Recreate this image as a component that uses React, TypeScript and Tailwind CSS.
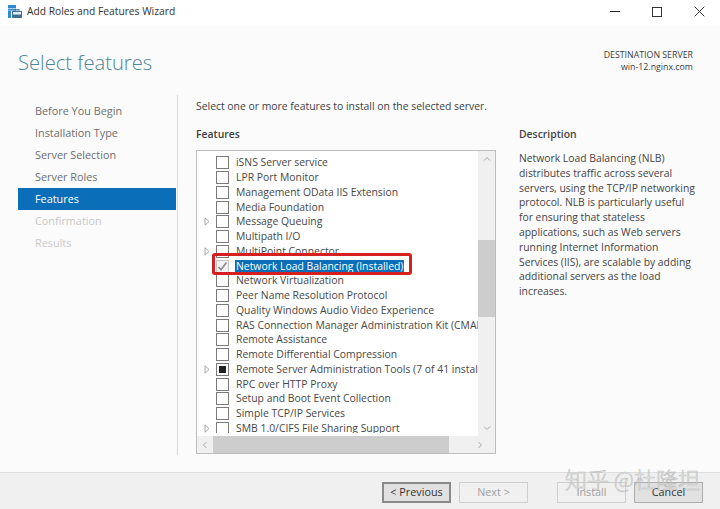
const rows: [string, boolean, string][] = [
  ["iSNS Server service", false, "n"],
  ["LPR Port Monitor", false, "n"],
  ["Management OData IIS Extension", false, "n"],
  ["Media Foundation", false, "n"],
  ["Message Queuing", true, "n"],
  ["Multipath I/O", false, "n"],
  ["MultiPoint Connector", true, "n"],
  ["Network Load Balancing (Installed)", false, "c"],
  ["Network Virtualization", false, "n"],
  ["Peer Name Resolution Protocol", false, "n"],
  ["Quality Windows Audio Video Experience", false, "n"],
  ["RAS Connection Manager Administration Kit (CMAK)", false, "n"],
  ["Remote Assistance", false, "n"],
  ["Remote Differential Compression", false, "n"],
  ["Remote Server Administration Tools (7 of 41 installed)", true, "p"],
  ["RPC over HTTP Proxy", false, "n"],
  ["Setup and Boot Event Collection", false, "n"],
  ["Simple TCP/IP Services", false, "n"],
  ["SMB 1.0/CIFS File Sharing Support", true, "n"],
];

const steps = [
  ["Before You Begin", "n"],
  ["Installation Type", "n"],
  ["Server Selection", "n"],
  ["Server Roles", "n"],
  ["Features", "a"],
  ["Confirmation", "d"],
  ["Results", "d"],
];

function Row({ label, arrow, state }: { label: string; arrow: boolean; state: string }) {
  const selected = state === "c";
  return (
    <div className={`flex h-[14.75px] items-center shrink-0 ${selected ? "relative z-10 bg-white" : ""}`}>
      <div className="w-[19px] flex justify-center shrink-0">
        {arrow && (
          <svg width="6" height="9" viewBox="0 0 6 9">
            <path d="M1 .8 5 4.5 1 8.2Z" fill="none" stroke="#a6a6a6" />
          </svg>
        )}
      </div>
      <div className={`w-[13px] h-[13px] border shrink-0 flex items-center justify-center ${selected ? "border-[#c4c4c4] bg-[#f2f2f2]" : "border-[#7a7a7a] bg-white"}`}>
        {selected && (
          <svg width="11" height="11" viewBox="0 0 11 11">
            <path d="M1.5 6 4 8.8 9.5 1.5" fill="none" stroke="#8a8a8a" strokeWidth="1.6" />
          </svg>
        )}
        {state === "p" && <div className="w-[7px] h-[7px] bg-[#222222]" />}
      </div>
      <div className={`ml-[6px] whitespace-nowrap leading-[13px] px-[1px] ${selected ? "bg-[#0b6eb8] text-white" : ""}`}>{label}</div>
    </div>
  );
}

function Chevron({ d }: { d: string }) {
  return (
    <svg width="8" height="8" viewBox="0 0 8 8">
      <path d={d} fill="none" stroke="#a8a8a8" strokeWidth="1" />
    </svg>
  );
}

function Button({ label, kind }: { label: string; kind: "on" | "off" | "cancel" }) {
  const cls =
    kind === "off"
      ? "border border-[#cfcfcf] text-[#a0a0a0] bg-[#f0f0f0]"
      : kind === "on"
        ? "border-2 border-[#8a8a8a] text-[#333333] bg-[#e1e1e1]"
        : "border border-[#adadad] text-[#333333] bg-[#e1e1e1]";
  return (
    <div className={`w-[69px] h-[21px] flex items-center justify-center text-[10.8px] ${cls}`}>{label}</div>
  );
}

export default function App() {
  return (
    <div
      className="relative w-[720px] h-[509px] overflow-hidden bg-[#fbfbfb] flex flex-col text-[#444444] text-[10.4px]"
      style={{ fontFamily: '"Open Sans", "Noto Sans", sans-serif' }}
    >
      <div className="h-[26px] bg-white flex items-center shrink-0 pl-[8px] pb-[2px]">
        <svg width="14" height="14" viewBox="0 0 14 14" className="shrink-0">
          <rect x="0" y="0" width="8" height="3" fill="#2f8ad0" />
          <rect x="0" y="3.6" width="8" height="2" fill="#2f8ad0" />
          <rect x="0" y="6" width="3" height="7" fill="#2f8ad0" />
          <rect x="4" y="6" width="10" height="7" fill="#3f6f92" />
          <rect x="5" y="7" width="8" height="2.5" fill="#e4edf3" />
          <rect x="7" y="4.5" width="4" height="1.5" fill="none" stroke="#3f6f92" strokeWidth=".8" />
        </svg>
        <div className="ml-[5px] text-[10.25px] text-[#333333]">Add Roles and Features Wizard</div>
        <div className="ml-auto flex items-center pr-[15px] gap-[32px] pb-[1px]">
          <div className="w-[10px] h-[1px] bg-[#222222]" />
          <div className="w-[10px] h-[10px] border border-[#333333]" />
          <svg width="11" height="11" viewBox="0 0 11 11">
            <path d="M.7.7 10.3 10.3M10.3.7.7 10.3" stroke="#333333" strokeWidth="1" />
          </svg>
        </div>
      </div>

      <div className="flex justify-between h-[69px] shrink-0 pl-[18px] pr-[27px]">
        <div className="text-[20.2px] leading-[30px] mt-[21px] text-[#4b8697] font-light">Select features</div>
        <div className="text-right text-[8.8px] leading-[12.5px] mt-[22.5px] text-[#3c3c3c]">
          <div>DESTINATION SERVER</div>
          <div>win-12.nginx.com</div>
        </div>
      </div>

      <div className="flex h-[377px] shrink-0">
        <div className="w-[178px] shrink-0 border-r-[1px] border-[#d8d8d8] h-[360px] flex flex-col pt-[5px] text-[10.85px]">
          {steps.map(([label, s]) => (
            <div
              key={label}
              className={`h-[22px] shrink-0 flex items-center ${s === "a" ? "bg-[#0b6eb8] text-white ml-[18px] pl-[17px] w-[158px]" : s === "d" ? "text-[#c8c8c8] pl-[35px]" : "text-[#6e6e6e] pl-[35px]"}`}
            >
              {label}
            </div>
          ))}
        </div>
        <div className="w-[322px] pl-[18px] shrink-0">
          <div className="h-[16px] leading-[16px] mt-[3px] whitespace-nowrap text-[#3f3f3f]">Select one or more features to install on the selected server.</div>
          <div className="h-[16px] leading-[16px] mt-[12px] font-semibold text-[#3f3f3f]">Features</div>
          <div className="relative mt-[8px] w-[300px] h-[304px] border border-[#bdbdbd] bg-white flex flex-col">
            <div className="flex flex-1 min-h-0">
              <div className="relative flex-1 min-w-0 overflow-hidden">
                <div className="h-[282px] flex flex-col pt-[4.5px] overflow-hidden text-[#474747]">
                  {rows.map(([l, a, s]) => (
                    <Row key={l} label={l} arrow={a} state={s} />
                  ))}
                </div>
              </div>
              <div className="w-[17px] shrink-0 bg-[#f0f0f0] flex flex-col items-center">
                <div className="h-[16px] flex items-center justify-center"><Chevron d="M1 5.5 4 2.5 7 5.5" /></div>
                <div className="h-[73px] shrink-0" />
                <div className="w-full h-[77px] bg-[#cdcdcd] shrink-0" />
                <div className="flex-1" />
                <div className="h-[16px] flex items-center justify-center"><Chevron d="M1 2.5 4 5.5 7 2.5" /></div>
              </div>
            </div>
            <div className="h-[17px] shrink-0 bg-[#f0f0f0] flex items-center">
              <div className="w-[16px] flex justify-center"><Chevron d="M5.5 1 2.5 4 5.5 7" /></div>
              <div className="w-[236px] h-full bg-[#cdcdcd]" />
              <div className="flex-1" />
              <div className="w-[30px] flex justify-center"><Chevron d="M2.5 1 5.5 4 2.5 7" /></div>
            </div>
            <div className="absolute z-20 left-[15px] top-[102px] w-[200px] h-[22px] border-[3px] border-[#d6201f] rounded-[3px]" />
          </div>
        </div>
        <div className="w-[170px] pt-[31px] pl-[19px] shrink-0 text-[#444444]">
          <div className="font-semibold leading-[16px] mb-[9px]">Description</div>
          <div className="text-[10.35px] leading-[14.8px] w-[185px]">
            Network Load Balancing (NLB)<br />
            distributes traffic across several<br />
            servers, using the TCP/IP networking<br />
            protocol. NLB is particularly useful<br />
            for ensuring that stateless<br />
            applications, such as Web servers<br />
            running Internet Information<br />
            Services (IIS), are scalable by adding<br />
            additional servers as the load<br />
            increases.
          </div>
        </div>
      </div>

      <div className="flex-1 bg-[#f0f0f0] border-t border-[#dfdfdf] flex items-start pt-[9px] pl-[382px]">
        <Button label="< Previous" kind="on" />
        <div className="w-[8px]" />
        <Button label="Next >" kind="off" />
        <div className="w-[29px]" />
        <Button label="Install" kind="off" />
        <div className="w-[8px]" />
        <Button label="Cancel" kind="cancel" />
      </div>

      <div
        className="absolute left-[565px] top-[463px] text-[22px] leading-[30px] whitespace-nowrap text-[#ffffff99] font-light pointer-events-none"
        style={{ fontFamily: '"Noto Sans CJK SC", sans-serif', WebkitTextStroke: "0.6px #a8a8a8c0" }}
      >
        知乎 @杜隆坦
      </div>
    </div>
  );
}
